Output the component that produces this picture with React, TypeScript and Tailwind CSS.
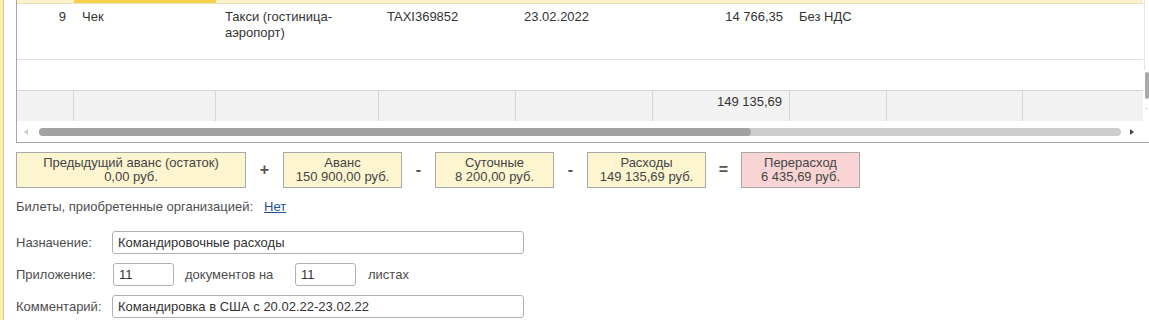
import React from "react";

const COLS = "grid grid-cols-[57px_142px_163px_137px_137px_137px_97px_136px_120px]";

function Box({ title, value, red }: { title: string; value: string; red?: boolean }) {
  return (
    <div
      className={`flex flex-col items-center justify-center h-[36px] border border-[#a8a8a8] text-[13px] leading-[14px] text-[#444] ${
        red ? "bg-[#f8d4d4]" : "bg-[#fdf5d0]"
      }`}
    >
      <div>{title}</div>
      <div>{value}</div>
    </div>
  );
}

function Op({ ch, w }: { ch: string; w: number }) {
  return (
    <div
      className="flex items-center justify-center text-[16px] font-bold text-[#555]"
      style={{ width: w }}
    >
      {ch}
    </div>
  );
}

export default function App() {
  const footer = ["", "", "", "", "", "149 135,69", "", "", ""];
  return (
    <div
      className="flex h-[320px] w-[1149px] overflow-hidden bg-white text-[#333]"
      style={{ fontFamily: '"Liberation Sans", Arial, sans-serif' }}
    >
      {/* left yellow strip */}
      <div className="w-[4px] bg-[#fbedb0] border-r border-[#d9cc8f] shrink-0" />
      <div className="flex flex-col ml-[12px] flex-1 min-w-0">
        {/* table */}
        <div className="border-l border-b border-[#a6a6a6] h-[143px] flex flex-col">
          <div className="flex h-[121px]">
            <div className="flex flex-col w-[1126px]">
              {/* previous selected row bottom */}
              <div className={`${COLS} h-[4px] border-b border-[#e6e0c0]`}>
                <div className="bg-[#fcf3c8]" />
                <div className="bg-[#f6d24c]" />
                <div className="bg-[#fcf3c8]" />
                <div className="bg-[#fcf3c8]" />
                <div className="bg-[#fcf3c8]" />
                <div className="bg-[#fcf3c8]" />
                <div className="bg-[#fcf3c8]" />
                <div className="bg-[#fcf3c8]" />
                <div className="bg-[#fcf3c8]" />
              </div>
              {/* row 9 */}
              <div className={`${COLS} h-[56px] border-b border-[#e2e2e2] text-[13px] leading-[16px] pt-[5px]`}>
                <div className="text-right pr-[8px]">9</div>
                <div className="pl-[8px]">Чек</div>
                <div className="pl-[9px]">
                  Такси (гостиница-
                  <br />
                  аэропорт)
                </div>
                <div className="pl-[8px]">TAXI369852</div>
                <div className="pl-[8px]">23.02.2022</div>
                <div className="text-right pr-[7px]">14 766,35</div>
                <div className="pl-[9px]">Без НДС</div>
                <div />
                <div />
              </div>
              {/* empty row */}
              <div className="h-[31px] border-b border-[#d4d4d4]" />
              {/* footer */}
              <div className={`${COLS} h-[30px] bg-[#f2f2f2] text-[13px] leading-[16px]`}>
                {footer.map((t, i) => (
                  <div
                    key={i}
                    className={`pt-[3px] text-right pr-[7px] ${i < 8 ? "border-r border-[#d6d6d6]" : ""}`}
                  >
                    {t}
                  </div>
                ))}
              </div>
            </div>
            {/* vertical scrollbar */}
            <div className="relative flex-1">
              <div className="absolute left-[1px] top-0 h-[70px] w-[1px] bg-[#e4e4e4]" />
              <div className="absolute left-[2px] top-[72px] h-[27px] w-[4px] rounded-[2px] bg-[#a9a9a9]" />
              <div className="absolute left-[3px] top-[108px] h-[1px] w-[1px] bg-[#999]" />
            </div>
          </div>
          {/* horizontal scrollbar */}
          <div className="flex items-center h-[21px] pt-[1px]">
            <div className="w-[11px] flex justify-end pr-[0px]">
              <svg width="4" height="6" viewBox="0 0 4 6">
                <polygon points="4,0 0,3 4,6" fill="#c9c9c9" />
              </svg>
            </div>
            <div className="ml-[11px] flex h-[8px] w-[1082px] rounded-[4px] bg-[#cdcdcd]">
              <div className="h-[8px] w-[712px] rounded-[4px] bg-[#a2a2a2]" />
            </div>
            <div className="ml-[9px]">
              <svg width="4" height="6" viewBox="0 0 4 6">
                <polygon points="0,0 4,3 0,6" fill="#444" />
              </svg>
            </div>
          </div>
        </div>

        {/* totals */}
        <div className="flex mt-[9px]">
          <div className="w-[230px]">
            <Box title="Предыдущий аванс (остаток)" value="0,00 руб." />
          </div>
          <Op ch="+" w={37} />
          <div className="w-[119px]">
            <Box title="Аванс" value="150 900,00 руб." />
          </div>
          <Op ch="-" w={33} />
          <div className="w-[119px]">
            <Box title="Суточные" value="8 200,00 руб." />
          </div>
          <Op ch="-" w={33} />
          <div className="w-[119px]">
            <Box title="Расходы" value="149 135,69 руб." />
          </div>
          <Op ch="=" w={35} />
          <div className="w-[119px]">
            <Box title="Перерасход" value="6 435,69 руб." red />
          </div>
        </div>

        {/* tickets */}
        <div className="flex mt-[11px] text-[13px] leading-[16px] text-[#4d4d4d]">
          <span>Билеты, приобретенные организацией:</span>
          <span className="ml-[11px] text-[#1c4fa0] underline">Нет</span>
        </div>

        {/* Назначение */}
        <div className="flex items-center mt-[16px] text-[13px] text-[#4d4d4d]">
          <div className="w-[96px]">Назначение:</div>
          <div className="w-[412px] h-[23px] border border-[#b1b1b1] rounded-[3px] flex items-center pl-[5px] text-[#333]">
            Командировочные расходы
          </div>
        </div>

        {/* Приложение */}
        <div className="flex items-center mt-[9px] text-[13px] text-[#4d4d4d]">
          <div className="w-[97px]">Приложение:</div>
          <div className="w-[61px] h-[23px] border border-[#b1b1b1] rounded-[3px] flex items-center pl-[5px] text-[#333]">
            11
          </div>
          <div className="ml-[11px] w-[110px]">документов на</div>
          <div className="w-[61px] h-[23px] border border-[#b1b1b1] rounded-[3px] flex items-center pl-[5px] text-[#333]">
            11
          </div>
          <div className="ml-[12px]">листах</div>
        </div>

        {/* Комментарий */}
        <div className="flex items-center mt-[9px] text-[13px] text-[#4d4d4d]">
          <div className="w-[96px]">Комментарий:</div>
          <div className="w-[412px] h-[23px] border border-[#b1b1b1] rounded-[3px] flex items-center pl-[5px] text-[#333]">
            Командировка в США с 20.02.22-23.02.22
          </div>
        </div>
      </div>
    </div>
  );
}
